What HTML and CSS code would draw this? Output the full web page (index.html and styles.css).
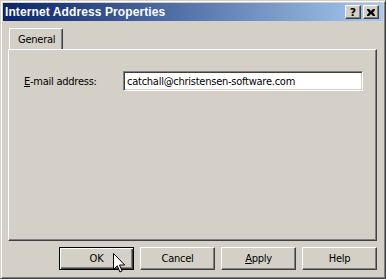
FILE: index.html
```html
<!DOCTYPE html>
<html lang="en">
<head>
  <meta charset="UTF-8" />
  <title>Internet Address Properties</title>
  <link rel="stylesheet" href="styles.css">
</head>
<body>
  <div class="window">
    <!-- Title bar -->
    <div class="titlebar">
      <span class="title">Internet Address Properties</span>
      <div class="caption-btns">
        <span class="cap-btn">?</span>
        <span class="cap-btn close">
          <svg width="8" height="7" viewBox="0 0 8 7">
            <path d="M0 0h2l2 2 2-2h2v1l-2 2.5 2 2.5v1h-2l-2-2-2 2h-2v-1l2-2.5-2-2.5z" fill="#000"/>
          </svg>
        </span>
      </div>
    </div>

    <!-- Body -->
    <div class="content">
      <div class="tabs">
        <div class="tab active">General</div>
      </div>
      <div class="panel">
        <div class="row">
          <label class="label" for="email"><u>E</u>-mail address:</label>
          <div class="input" id="email">catchall@christensen-software.com</div>
        </div>
      </div>
      <div class="buttons">
        <button class="btn default">OK</button>
        <button class="btn">Cancel</button>
        <button class="btn"><u>A</u>pply</button>
        <button class="btn">Help</button>
      </div>
    </div>

    <!-- Mouse pointer -->
    <svg class="pointer" width="12" height="20" viewBox="0 0 12 20">
      <path d="M0.5 0.5v16l3.8-3.7 2.6 6.2 2.2-1-2.6-6h5.2z" fill="#fff" stroke="#000" stroke-width="1"/>
    </svg>
  </div>
</body>
</html>
```

FILE: styles.css
```css
* {
  margin: 0; padding: 0;
  box-sizing: border-box;
}
body {
  background: #d4d0c8;
  font-family: 'DejaVu Sans Condensed', 'DejaVu Sans', sans-serif;
  font-stretch: condensed;
  font-size: 11px;
  letter-spacing: -0.25px;
  color: #000;
  overflow: hidden;
}
.window {
  position: relative;
  width: 386px;
  height: 279px;
  background: #d4d0c8;
  border: 1px solid;
  border-color: #d4d0c8 #404040 #404040 #d4d0c8;
  box-shadow: inset 1px 1px #fff, inset -1px -1px #808080;
  padding: 2px;
  display: flex;
  flex-direction: column;
}
.titlebar {
  height: 18px;
  background: linear-gradient(to right, #0a246a, #a6caf0);
  display: flex;
  align-items: center;
  justify-content: space-between;
  padding: 0 4px 0 2px;
}
.title {
  color: #fff;
  font-family: 'Liberation Sans', Arial, sans-serif;
  font-stretch: normal;
  font-weight: bold;
  font-size: 12px;
  letter-spacing: 0.1px;
}
.caption-btns {
  display: flex;
  gap: 2px;
}
.cap-btn {
  width: 16px;
  height: 14px;
  background: #d4d0c8;
  border: 1px solid;
  border-color: #fff #404040 #404040 #fff;
  box-shadow: inset -1px -1px #808080;
  display: flex;
  align-items: center;
  justify-content: center;
  font-weight: bold;
  font-size: 11px;
  line-height: 1;
  letter-spacing: 0;
  font-family: 'DejaVu Sans', sans-serif;
  font-stretch: normal;
}
.content {
  flex: 1;
  padding: 7px 6px 0 5px;
  display: flex;
  flex-direction: column;
}
.tabs {
  display: flex;
  padding-left: 1px;
  height: 21px;
  position: relative;
  z-index: 1;
}
.tab {
  width: 54px;
  height: 21px;
  border: 1px solid;
  border-bottom: none;
  border-color: #fff #404040 #404040 #fff;
  box-shadow: inset -1px 0 #808080;
  border-radius: 2px 2px 0 0;
  background: #d4d0c8;
  padding: 4px 0 0 8px;
}
.panel {
  height: 192px;
  border: 1px solid;
  border-color: #fff #404040 #404040 #fff;
  box-shadow: inset -1px -1px #808080;
  padding: 21px 0 0 15px;
}
.row {
  display: flex;
  align-items: center;
}
.label {
  width: 99px;
}
.input {
  width: 240px;
  height: 20px;
  background: #fff;
  border: 1px solid;
  border-color: #808080 #fff #fff #808080;
  box-shadow: inset 1px 1px #404040, inset -1px -1px #d4d0c8;
  padding: 3px 0 0 3px;
  white-space: nowrap;
}
.buttons {
  display: flex;
  justify-content: flex-end;
  gap: 6px;
  padding: 6px 0 0;
}
.btn {
  width: 75px;
  height: 23px;
  background: #d4d0c8;
  border: 1px solid;
  border-color: #fff #404040 #404040 #fff;
  box-shadow: inset -1px -1px #808080;
  font-family: inherit;
  font-stretch: condensed;
  font-size: 11px;
  letter-spacing: inherit;
  color: #000;
}
.btn.default {
  border: 1px solid #000;
  box-shadow: inset 1px 1px #fff, inset -1px -1px #404040, inset -2px -2px #808080;
}
.pointer {
  position: absolute;
  left: 112px;
  top: 252px;
}
```
